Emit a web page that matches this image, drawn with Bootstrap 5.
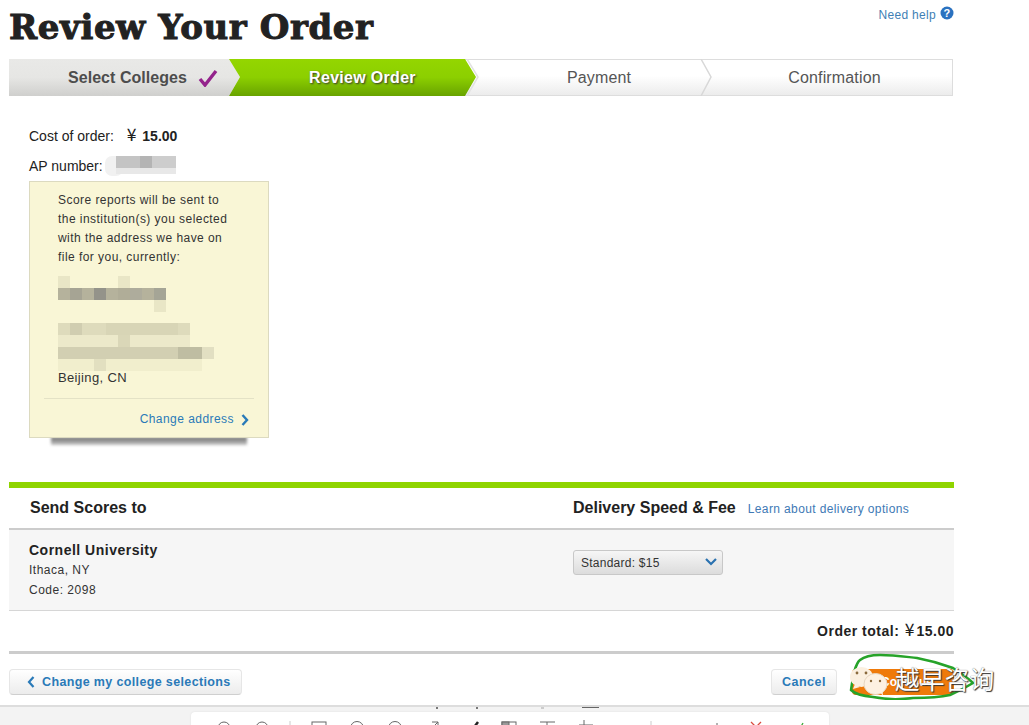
<!DOCTYPE html>
<html lang="en">
<head>
<meta charset="utf-8">
<title>Review Your Order</title>
<link rel="stylesheet" href="https://cdn.jsdelivr.net/npm/bootstrap@5.3.0/dist/css/bootstrap.min.css">
<style>
html{height:725px;overflow:hidden;background:#fff}
body{height:725px;overflow:hidden;background:transparent;font-family:"Liberation Sans",Arial,sans-serif;font-size:14px;color:#222;position:relative}
a{text-decoration:none;color:#2a7ab8}
.pg{width:945px;margin-left:9px;height:705px}
.top-row{height:59px}
.pg-title{font-family:"DejaVu Serif",serif;font-weight:700;font-size:34px;line-height:1;margin:10px 0 0;color:#222;-webkit-text-stroke:1px #222;letter-spacing:.58px}
.help{font-size:12px;color:#3f7fb5;margin-top:6px;letter-spacing:.3px}
.stepper{height:37px;width:944px;border:1px solid #ddd;border-left:0;background:linear-gradient(#fff 45%,#ececec);position:relative}
.stp{height:37px;margin-top:-1px;display:flex;align-items:center;justify-content:center;font-size:16px;color:#555;flex:none;letter-spacing:.15px}
.stp1{width:231px;background:linear-gradient(#e9e9e7,#e6e6e4 50%,#cfcfcd);clip-path:polygon(0 0,221px 0,231px 18px,220px 100%,0 100%);font-weight:700;padding-left:37px;gap:11px;color:#4d4d4d;letter-spacing:.05px}
.stp2{width:248px;margin-left:-11px;background:linear-gradient(#94d600,#8ccf00 50%,#68a300);clip-path:polygon(0 0,236px 0,247px 18px,236px 100%,0 100%,11px 18px);color:#fff;font-weight:700;text-shadow:1px 1px 2px #333;padding-left:19px;letter-spacing:.3px}
.stp3{width:236px;margin-left:-11px;padding-left:30px}
.stp4{width:240px;margin-left:2px;padding-left:21px}
.chev{position:absolute;left:691px;top:-1px}
.chev2{position:absolute;left:457px;top:-1px}
.cost{margin:32px 0 0 20px;line-height:17px}
.yen{font-family:"Noto Sans CJK SC",sans-serif;font-weight:400;font-size:17.5px;line-height:0}
.cost b{margin-left:9px}
.cost .yen{margin-right:2px}
.ap{margin:13px 0 0 20px;line-height:17px;height:23px}
.ap svg{vertical-align:top;margin:-3px 0 0 -3px}
.note{width:240px;height:257px;margin-left:20px;background:#f9f6d6;border:1px solid #dcdac0;font-size:12px;line-height:19px;position:relative;color:#333;letter-spacing:.45px;padding:9px 14px 0 28px}
.note::after{content:"";position:absolute;left:21px;right:21px;bottom:-8px;height:8px;background:linear-gradient(#6d6d6d,#c5c5c5);filter:blur(1.500px);z-index:-1}
.note p{margin:0}
.mosaic{display:block;margin:9px 0 0 0}
.city{font-size:13px;letter-spacing:.35px;margin-top:-2px;line-height:17px}
.note-foot{margin:12px 0 0 -14px;border-top:1px solid #e4e2c6;text-align:right;padding:11px 5px 0 0;letter-spacing:.45px;line-height:19px}
.note-foot svg{margin-left:7px}
.tbl{margin-top:44px;border-top:6px solid #8fd400}
.thead{height:40px;border-bottom:2px solid #ccc;box-sizing:content-box}
.col-a{width:564px;flex:none}
.thead b{font-size:16px}
.thead .col-a{padding-left:21px}
.thead a{font-size:12px;margin-left:12px;color:#4079b5;letter-spacing:.38px}
.trow{height:81px;background:#f6f6f6;border-bottom:1px solid #d6d6d6;padding-top:10px}
.trow .col-a{padding-left:20px;font-size:12px;line-height:20px;color:#333;letter-spacing:.5px}
.trow b{font-size:14px;color:#222;display:block;letter-spacing:.5px;line-height:20px}
.sel{width:150px;height:25px;margin-top:10px;padding:0 0 0 7px;font-size:12px;letter-spacing:.25px;color:#333;border:1px solid #c8c8c8;border-radius:3px;--bs-form-select-bg-img:none;background:linear-gradient(#f6f6f6,#dcdcdc)}
.sel-wrap{position:relative;width:150px}
.sel-wrap svg{position:absolute;right:6px;top:18px;pointer-events:none}
.total{border-bottom:3px solid #ccc;font-weight:700;font-size:14px;box-sizing:content-box;text-align:right;line-height:40px;height:40px;letter-spacing:.5px}
.total .yen{margin:0 2px 0 1px;letter-spacing:0}
.acts{margin-top:15px}
.btn-lite{height:26px;padding:0 9px;font-size:12.5px;font-weight:700;color:#2a7ab8;border:1px solid #e6e6e6;border-bottom-color:#cfcfcf;border-radius:4px;background:linear-gradient(#fff,#ececec);line-height:24px;letter-spacing:.36px;display:inline-flex;align-items:center;gap:7px}
.btn-lite:hover{color:#2a7ab8}
.back{padding-left:17px;width:233px}
.cancel{width:66px;justify-content:center;margin-right:15px;letter-spacing:.5px}
.go{width:102px;height:26px;background:#ef7a0a;color:#fff;border:0;font-size:12px;font-weight:700;padding:0 0 0 8px;border-radius:4px}
.tools{height:20px;background:#f3f3f3;border-top:2px solid #ddd;overflow:hidden;display:flex;justify-content:center;position:relative}
.tool-bar{width:638px;height:30px;margin:5px 0 0 -9px;background:#fff;border-radius:4px 4px 0 0;box-shadow:0 0 2px #ddd}
.tick-strip{position:absolute;left:0;top:0}
.mark-layer{position:absolute;left:845px;top:650px;width:160px;height:50px}
.wm{position:absolute;left:895px;top:663px;font-family:"Noto Sans CJK SC",sans-serif;font-size:24.5px;line-height:32px;color:#fff;letter-spacing:.4px;text-shadow:1px 1px 1px #333,0 0 1px #555}
</style>
</head>
<body>
<div class="pg">
  <div class="top-row d-flex justify-content-between">
    <h1 class="pg-title">Review Your Order</h1>
    <a class="help d-inline-flex align-items-start gap-1" href="#">Need help
      <svg width="14" height="14" viewBox="0 0 14 14" class="mt-0"><circle cx="7" cy="7" r="6.5" fill="#2a72c0"/><text x="7" y="11" text-anchor="middle" font-size="11" font-weight="700" fill="#fff" font-family="Liberation Sans">?</text></svg>
    </a>
  </div>

  <div class="stepper d-flex">
    <div class="stp stp1">Select Colleges
      <svg width="20" height="18" viewBox="0 0 20 18"><path d="M2 10l5 6L18 2" fill="none" stroke="#94248c" stroke-width="3.4"/></svg>
    </div>
    <div class="stp stp2">Review Order</div>
    <div class="stp stp3">Payment</div>
    <div class="stp stp4">Confirmation</div>
    <svg class="chev2" width="16" height="37" viewBox="0 0 16 37"><path d="M1 0L12 18 1 37" fill="none" stroke="#e2e2e2" stroke-width="1.5"/></svg>
    <svg class="chev" width="14" height="37" viewBox="0 0 14 37"><path d="M1 0L11 18 1 37" fill="none" stroke="#d8d8d8" stroke-width="1.5"/></svg>
  </div>

  <div class="cost">Cost of order: <b><span class="yen">¥</span> 15.00</b></div>
  <div class="ap">AP number:
    <svg width="74" height="22" viewBox="0 0 74 22"><rect x="1" y="1" width="18" height="20" rx="7" fill="#f1f1f1"/><rect x="12" y="1" width="60" height="18" fill="#e8e8e8"/><rect x="12" y="1" width="24" height="12" fill="#c4c4c4"/><rect x="36" y="1" width="12" height="12" fill="#b4b4b4"/><rect x="48" y="1" width="24" height="12" fill="#cdcdcd"/></svg>
  </div>

  <div class="note">
    <p>Score reports will be sent to<br>the institution(s) you selected<br>with the address we have on<br>file for you, currently:</p>
    <svg class="mosaic" width="156" height="95" viewBox="0 0 156 95">
      <g fill="#e9e6c6"><rect width="12" height="12"/><rect x="60" width="12" height="12"/><rect x="96" y="24" width="12" height="12"/></g>
      <rect y="12" width="108" height="12" fill="#b5b29c"/>
      <rect x="12" y="12" width="12" height="12" fill="#a6a494"/><rect x="36" y="12" width="12" height="12" fill="#94938a"/><rect x="60" y="12" width="12" height="12" fill="#b0ad98"/><rect x="72" y="12" width="12" height="12" fill="#aeac9c"/><rect x="96" y="12" width="12" height="12" fill="#a5a596"/>
      <rect y="47" width="132" height="12" fill="#dedbbc"/><rect x="12" y="47" width="12" height="12" fill="#d0cdb0"/><rect x="48" y="47" width="72" height="12" fill="#d8d5b6"/>
      <rect y="59" width="132" height="12" fill="#ece9ca"/><rect x="60" y="59" width="12" height="12" fill="#dad7b8"/>
      <rect y="71" width="156" height="12" fill="#d2cfb2"/><rect x="120" y="71" width="24" height="12" fill="#bfbda2"/><rect x="144" y="71" width="12" height="12" fill="#e2dfc2"/>
      <rect y="83" width="144" height="12" fill="#f1eecd"/><rect x="36" y="83" width="12" height="12" fill="#e2dfc0"/>
    </svg>
    <div class="city">Beijing, CN</div>
    <div class="note-foot"><a href="#">Change address<svg width="8" height="12" viewBox="0 0 8 12"><path d="M1.500 1l4.500 5-4.500 5" fill="none" stroke="#2a7ab8" stroke-width="2.400"/></svg></a></div>
  </div>

  <div class="tbl">
    <div class="thead d-flex align-items-center">
      <div class="col-a"><b>Send Scores to</b></div>
      <div><b>Delivery Speed &amp; Fee</b><a href="#">Learn about delivery options</a></div>
    </div>
    <div class="trow d-flex">
      <div class="col-a"><b>Cornell University</b>Ithaca, NY<br>Code: 2098</div>
      <div class="sel-wrap">
        <select class="form-select sel"><option>Standard: $15</option></select>
        <svg width="12" height="8" viewBox="0 0 12 8"><path d="M1 1l5 5 5-5" fill="none" stroke="#2a72b0" stroke-width="2.200"/></svg>
      </div>
    </div>
    <div class="total">Order total: <span class="yen">¥</span>15.00</div>
  </div>

  <div class="acts d-flex justify-content-between">
    <a class="btn btn-lite back" href="#"><svg width="8" height="12" viewBox="0 0 8 12"><path d="M6.500 1L2 6l4.500 5" fill="none" stroke="#2a7ab8" stroke-width="2.200"/></svg>Change my college selections</a>
    <div class="d-flex">
      <a class="btn btn-lite cancel" href="#">Cancel</a>
      <button class="btn go" type="button">Continue</button>
    </div>
  </div>
</div>

<div class="tools">
  <svg class="tick-strip" width="1029" height="3" viewBox="0 0 1029 3"><g fill="#777"><rect x="436" y="0" width="2" height="2"/><rect x="476" y="0" width="2" height="2"/></g><rect x="541" y="0" width="3" height="2" fill="#ccc"/><rect x="582" y="0" width="17" height="1" fill="#666"/></svg>
  <div class="tool-bar">
    <svg width="638" height="20" viewBox="0 0 638 20" fill="none" stroke="#666" stroke-width="1">
      <circle cx="33" cy="15" r="6"/><path d="M33 12v2"/><circle cx="71" cy="15" r="6"/><path d="M99 8v12" stroke="#ccc"/>
      <rect x="121" y="9" width="14" height="14"/><circle cx="166" cy="15" r="6.500"/><circle cx="204" cy="15" r="6.500"/><path d="M201 13h.5M207 13h.5"/>
      <path d="M238 18l9-9M241 9h6v6"/><path d="M281 17l6-8" stroke="#222" stroke-width="2.500"/>
      <rect x="311" y="9" width="14" height="14"/><rect x="311" y="9" width="7" height="14" fill="#999"/>
      <path d="M349 9h15M356 9v12"/><path d="M393 7v12h11M388 12h14v8"/><path d="M427 14l-3 2 3 2M424 16h13"/>
      <path d="M460 8v12" stroke="#ccc"/><path d="M484 16h8M489 13l3 3-3 2"/><path d="M526 10v10"/>
      <path d="M560 9l10 10M570 9l-10 10" stroke="#d94b3f" stroke-width="1.300"/><path d="M603 16l4 3 5-9" stroke="#3cab3c" stroke-width="1.300"/>
    </svg>
  </div>
</div>

<svg class="mark-layer" viewBox="0 0 160 50" fill="none">
  <path d="M6 40C8 26 10 14 15 10 20 6 26 5 35 5 50 5 62 7 72 8 88 11 100 15 108 18 116 23 124 29 128 33 120 38 112 42 105 45 92 48 80 48 68 48 52 50 38 49 28 47 18 46 10 44 6 40Z" stroke="#26a329" stroke-width="2.500"/>
  <ellipse cx="16.500" cy="27" rx="11.500" ry="10" fill="#fbf0e0"/><path d="M10 34l-2 5 7-2z" fill="#fbf0e0"/>
  <ellipse cx="30.500" cy="34" rx="11.500" ry="10.500" fill="#fdf1e2" stroke="#e7d7c2"/><path d="M35 42l3 4-.5-5z" fill="#fdf1e2"/>
  <g fill="#8a6a3c"><circle cx="12" cy="23" r="1.400"/><circle cx="21" cy="23" r="1.400"/><circle cx="26" cy="31" r="1.200"/><circle cx="35" cy="31" r="1.200"/></g>
</svg>
<div class="wm">越早咨询</div>
</body>
</html>
